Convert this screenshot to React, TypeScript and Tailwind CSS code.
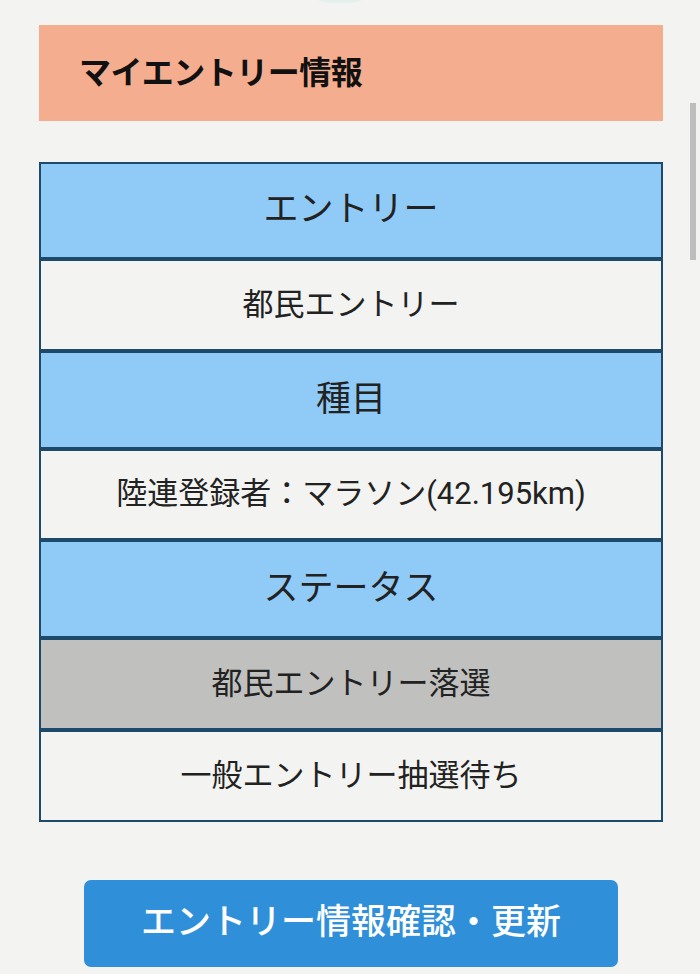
import React from "react";

const font = { fontFamily: 'Roboto, "Noto Sans CJK JP", "Noto Sans", sans-serif' };

type Row = { label: string; kind: "head" | "cell" | "muted"; h: string };

// Heights include the 4px top rule on every row after the first.
const rows: Row[] = [
  { label: "エントリー", kind: "head", h: "h-[93px]" },
  { label: "都民エントリー", kind: "cell", h: "h-[92px]" },
  { label: "種目", kind: "head", h: "h-[98px]" },
  { label: "陸連登録者：マラソン(42.195km)", kind: "cell", h: "h-[91px]" },
  { label: "ステータス", kind: "head", h: "h-[98px]" },
  { label: "都民エントリー落選", kind: "muted", h: "h-[92px]" },
  { label: "一般エントリー抽選待ち", kind: "cell", h: "h-[92px]" },
];

function TableRow({ row, first }: { row: Row; first: boolean }) {
  const bg =
    row.kind === "head" ? "bg-[#90caf6]" : row.kind === "muted" ? "bg-[#c0c0bf]" : "bg-[#f3f3f1]";
  const size = row.kind === "head" ? "text-[35px]" : "text-[31px]";
  return (
    <div
      className={`${row.h} ${bg} ${first ? "" : "border-t-4 border-[#1d4a6b]"} flex items-center justify-center text-[#222222] ${size}`}
    >
      {row.label}
    </div>
  );
}

export default function App() {
  return (
    <div className="relative w-[700px] h-[974px] overflow-hidden bg-[#f3f3f1]" style={font}>
      {/* edge of the round badge above the fold */}
      <div className="absolute left-[300px] -top-[60px] w-[80px] h-[63px] rounded-full bg-[#dceee9] opacity-70" />

      {/* scroll indicator */}
      <div className="absolute left-[690px] top-[103px] w-[6px] h-[157px] bg-[#bdbdbd]" />

      <div className="pt-[25px]">
        <div className="ml-[39px] w-[624px] h-[96px] bg-[#f4ae8f] flex items-center pl-[40px]">
          <h1 className="text-[32px] font-bold text-[#111111] tracking-[-0.5px]">マイエントリー情報</h1>
        </div>

        <div className="ml-[39px] mt-[41px] w-[624px] border-2 border-[#1d4a6b] flex flex-col">
          {rows.map((r, i) => (
            <TableRow key={r.label} row={r} first={i === 0} />
          ))}
        </div>

        <div className="mt-[58px] flex justify-center pl-[2px]">
          <button className="w-[534px] h-[87px] rounded-[7px] bg-[#2f8fd8] text-white text-[35px] font-medium flex items-center justify-center">
            エントリー情報確認・更新
          </button>
        </div>
      </div>
    </div>
  );
}
